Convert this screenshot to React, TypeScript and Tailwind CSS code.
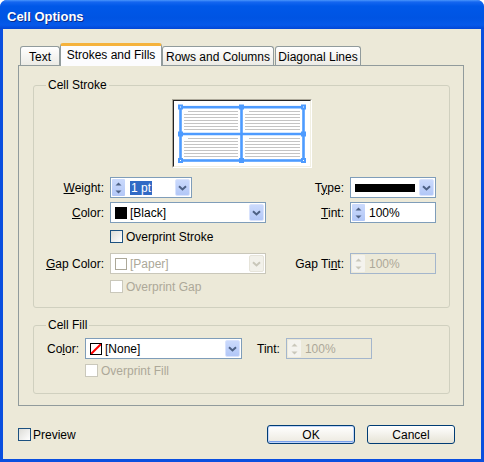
import React from "react"

const Chevron = ({ color = "#4d6185" }: { color?: string }) => (
  <svg width="9" height="6" viewBox="0 0 9 6">
    <path d="M1 1.2l3.5 3.3L8 1.2" fill="none" stroke={color} strokeWidth="2" />
  </svg>
)

const DropButton = ({ disabled }: { disabled?: boolean }) => (
  <div
    className={
      disabled
        ? "ml-auto w-[15px] m-[1px] flex items-center justify-center rounded-[2px] bg-[#f2f1ea] border border-[#e6e4da]"
        : "ml-auto w-[15px] m-[1px] flex items-center justify-center rounded-[2px] bg-linear-to-b from-[#cbdafc] to-[#b2c7f7] border border-[#d9e3fd]"
    }
  >
    <Chevron color={disabled ? "#c9c7ba" : "#4d6185"} />
  </div>
)

const Spin = ({ disabled }: { disabled?: boolean }) => {
  const c = disabled ? "#c9c7ba" : "#4d6185"
  return (
    <div
      className={
        disabled
          ? "w-[13px] m-[1px] flex flex-col items-center justify-center gap-[4px] bg-[#f4f3ee] rounded-[1px]"
          : "w-[13px] m-[1px] flex flex-col items-center justify-center gap-[4px] bg-linear-to-b from-[#cbdafc] to-[#b2c7f7] rounded-[1px]"
      }
    >
      <svg width="7" height="4" viewBox="0 0 7 4">
        <path d="M0.5 3.5L3.5 0.6L6.5 3.5Z" fill={c} />
      </svg>
      <svg width="7" height="4" viewBox="0 0 7 4">
        <path d="M0.5 0.5L3.5 3.4L6.5 0.5Z" fill={c} />
      </svg>
    </div>
  )
}

const Check = ({ disabled }: { disabled?: boolean }) => (
  <span
    className={
      disabled
        ? "block w-[13px] h-[13px] shrink-0 border border-[#cac8bb] bg-white"
        : "block w-[13px] h-[13px] shrink-0 border border-[#1c5180] bg-linear-to-br from-[#dcdcd7] to-[#ffffff]"
    }
  />
)

const TablePreview = () => {
  const cells = [
    { x: 8, y: 8, w: 58, rows: [10, 13, 16, 19, 22, 25, 28] },
    { x: 69, y: 8, w: 59, rows: [10, 13, 16, 19, 22, 25, 28] },
    { x: 8, y: 34, w: 58, rows: [37, 40, 43, 46, 49, 52, 55] },
    { x: 69, y: 34, w: 59, rows: [37, 40, 43, 46, 49, 52, 55] },
  ]
  const handles: [number, number][] = [
    [6.5, 6], [67.5, 6], [129.5, 6],
    [6.5, 33], [129.5, 33],
    [6.5, 59.5], [67.5, 59.5], [129.5, 59.5],
  ]
  return (
    <div className="mx-auto mt-[13px] w-[140px] h-[69px] border-t border-l border-[#aca899] border-r border-b border-r-white border-b-white">
      <div className="w-full h-full border-t border-l border-[#222] border-r border-b border-r-[#f1efe2] border-b-[#f1efe2] bg-white">
        <svg width="136" height="65" viewBox="0 0 136 65" className="block">
          {cells.map((c, i) =>
            c.rows.map((y, j) => (
              <rect
                key={`${i}-${j}`}
                x={c.x + 2 + (j === 0 ? 4 : 0)}
                y={y}
                width={c.w - 4 - (j === 0 ? 4 : 0)}
                height="1"
                fill="#c4c4c4"
              />
            ))
          )}
          <rect x="6.5" y="6.2" width="123" height="53.3" fill="none" stroke="#4d9bff" strokeWidth="2.6" />
          <line x1="67.5" y1="6" x2="67.5" y2="60" stroke="#4d9bff" strokeWidth="2.6" />
          <line x1="6" y1="33" x2="130" y2="33" stroke="#4d9bff" strokeWidth="2.4" />
          {handles.map(([x, y], i) => (
            <g key={i}>
              <rect x={x - 2.5} y={y - 2.5} width="5" height="5" fill="#4d9bff" />
              {(i === 0 || i === 2 || i === 5 || i === 7) && (
                <rect x={x - 0.5} y={y - 0.5} width="1" height="1" fill="#ffffff" />
              )}
            </g>
          ))}
        </svg>
      </div>
    </div>
  )
}

export default function App() {
  return (
    <div className="w-[484px] h-[462px] flex flex-col bg-[#0a4fdf] rounded-t-[7px] overflow-hidden font-['Liberation_Sans',Arial,sans-serif] text-[12px] text-black">
      {/* title bar */}
      <div className="h-[29px] shrink-0 flex items-center pl-[7px] pt-[3px] bg-[linear-gradient(180deg,#4a95fb_0px,#1566f0_2px,#0058e8_6px,#0054e3_18px,#0659ea_25px,#0346d6_29px)]">
        <span className="text-[13px] font-bold text-white leading-none [text-shadow:1px_1px_0_#0a2a8a]">
          Cell Options
        </span>
      </div>

      {/* body */}
      <div className="flex-1 mx-[3px] mb-[3px] bg-[#ece9d8] flex flex-col pl-[15px] pt-[14px]">
        {/* tabs */}
        <div className="flex items-end h-[22px] pl-[2px]">
          <div className="w-[40px] h-[19px] flex items-center justify-center pt-[2px] border border-b-0 border-[#919b9c] rounded-t-[3px] bg-linear-to-b from-[#ffffff] to-[#ecebe5]">
            Text
          </div>
          <div className="relative z-10 -mb-px w-[102px] h-[23px] flex items-center justify-center pb-[2px] border-x border-[#919b9c] bg-[#fcfcfe] rounded-t-[3px] border-t-[3px] border-t-[#f5b23c]">
            Strokes and Fills
          </div>
          <div className="w-[112px] h-[19px] flex items-center justify-center pt-[2px] border border-b-0 border-[#919b9c] rounded-t-[3px] bg-linear-to-b from-[#ffffff] to-[#ecebe5]">
            Rows and Columns
          </div>
          <div className="ml-px w-[86px] h-[19px] flex items-center justify-center pt-[2px] border border-b-0 border-[#919b9c] rounded-t-[3px] bg-linear-to-b from-[#ffffff] to-[#ecebe5]">
            Diagonal Lines
          </div>
        </div>

        {/* tab panel */}
        <div className="w-[446px] h-[341px] border border-[#919b9c] bg-[#ece9d8] flex flex-col">
          {/* Cell Stroke */}
          <div className="relative ml-[14px] mt-[19px] w-[417px] h-[223px] border border-[#d0d0bf] rounded-[3px] flex flex-col">
            <span className="absolute -top-[8px] left-[12px] px-[2px] bg-[#ece9d8] leading-[14px]">Cell Stroke</span>
            <TablePreview />

            <div className="mt-[9px] h-[21px] flex items-center">
              <span className="w-[70px] text-right">
                <span className="underline">W</span>eight:
              </span>
              <div className="ml-[6px] w-[82px] h-[21px] flex bg-white border border-[#7f9db9]">
                <Spin />
                <div className="ml-[4px] flex items-center">
                  <span className="bg-[#316ac5] text-white leading-[14px] px-px">1 pt</span>
                </div>
                <DropButton />
              </div>
              <div className="ml-auto mr-[13px] flex items-center">
                <span>
                  T<span className="underline">y</span>pe:
                </span>
                <div className="ml-[6px] w-[86px] h-[21px] flex bg-white border border-[#7f9db9]">
                  <div className="ml-[4px] self-center w-[60px] h-[8px] bg-black" />
                  <DropButton />
                </div>
              </div>
            </div>

            <div className="mt-[4px] h-[21px] flex items-center">
              <span className="w-[70px] text-right">
                <span className="underline">C</span>olor:
              </span>
              <div className="ml-[6px] w-[156px] h-[21px] flex items-stretch bg-white border border-[#7f9db9]">
                <div className="ml-[4px] self-center w-[12px] h-[12px] bg-black" />
                <span className="ml-[3px] self-center">[Black]</span>
                <DropButton />
              </div>
              <div className="ml-auto mr-[13px] flex items-center">
                <span>
                  <span className="underline">T</span>int:
                </span>
                <div className="ml-[6px] w-[86px] h-[21px] flex bg-white border border-[#7f9db9]">
                  <Spin />
                  <span className="ml-[3px] self-center">100%</span>
                </div>
              </div>
            </div>

            <div className="mt-[7px] h-[13px] flex items-center pl-[76px]">
              <Check />
              <span className="ml-[3px]">Overprint Stroke</span>
            </div>

            <div className="mt-[10px] h-[21px] flex items-center">
              <span className="w-[70px] text-right">
                <span className="underline">G</span>ap Color:
              </span>
              <div className="ml-[6px] w-[156px] h-[21px] flex items-stretch bg-white border border-[#c9c7ba]">
                <div className="ml-[4px] self-center w-[12px] h-[12px] border border-[#aca899] bg-white" />
                <span className="ml-[3px] self-center text-[#aca899]">[Paper]</span>
                <DropButton disabled />
              </div>
              <div className="ml-auto mr-[13px] flex items-center">
                <span>
                  Gap Ti<span className="underline">n</span>t:
                </span>
                <div className="ml-[6px] w-[86px] h-[21px] flex bg-[#ece9d8] border border-[#a4b6cc]">
                  <Spin disabled />
                  <span className="ml-[3px] self-center text-[#aca899]">100%</span>
                </div>
              </div>
            </div>

            <div className="mt-[6px] h-[13px] flex items-center pl-[76px]">
              <Check disabled />
              <span className="ml-[3px] text-[#aca899]">Overprint Gap</span>
            </div>
          </div>

          {/* Cell Fill */}
          <div className="relative ml-[14px] mt-[17px] w-[417px] h-[69px] border border-[#d0d0bf] rounded-[3px] flex flex-col">
            <span className="absolute -top-[8px] left-[12px] px-[2px] bg-[#ece9d8] leading-[14px]">Cell Fill</span>
            <div className="mt-[12px] h-[21px] flex items-center pl-[13px]">
              <span className="w-[38px]">
                Co<span className="underline">l</span>or:
              </span>
              <div className="w-[157px] h-[21px] flex items-stretch bg-white border border-[#7f9db9]">
                <div className="ml-[4px] self-center w-[12px] h-[12px] border border-black bg-white overflow-hidden">
                  <svg width="10" height="10" viewBox="0 0 10 10" className="block">
                    <line x1="-1" y1="11" x2="11" y2="-1" stroke="#ff0000" strokeWidth="2" />
                  </svg>
                </div>
                <span className="ml-[3px] self-center">[None]</span>
                <DropButton />
              </div>
              <span className="ml-[15px]">Tint:</span>
              <div className="ml-[6px] w-[86px] h-[21px] flex bg-[#ece9d8] border border-[#a4b6cc]">
                <Spin disabled />
                <span className="ml-[3px] self-center text-[#aca899]">100%</span>
              </div>
            </div>
            <div className="mt-[5px] h-[13px] flex items-center pl-[51px]">
              <Check disabled />
              <span className="ml-[3px] text-[#aca899]">Overprint Fill</span>
            </div>
          </div>
        </div>

        {/* footer */}
        <div className="mt-[19px] h-[19px] flex items-center">
          <Check />
          <span className="ml-[2px]">Preview</span>
          <button className="ml-auto w-[88px] h-[19px] rounded-[3px] border border-[#003c74] bg-linear-to-b from-[#ffffff] to-[#ece9df] shadow-[inset_0_0_0_1px_#c2d6fa,inset_0_-1px_0_1px_#7aa0ea]">
            OK
          </button>
          <button className="ml-[12px] mr-[26px] w-[88px] h-[19px] rounded-[3px] border border-[#003c74] bg-linear-to-b from-[#ffffff] to-[#e6e3d6]">
            Cancel
          </button>
        </div>
      </div>
    </div>
  )
}
